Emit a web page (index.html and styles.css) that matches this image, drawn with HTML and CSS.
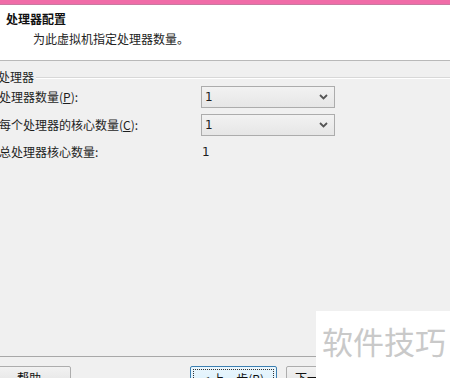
FILE: index.html
```html
<!DOCTYPE html>
<html lang="zh-CN">
<head>
<meta charset="utf-8">
<title>处理器配置</title>
<link rel="stylesheet" href="styles.css">
</head>
<body>
<div class="window">
  <div class="topbar"></div>
  <div class="header">
    <div class="title">处理器配置</div>
    <div class="subtitle">为此虚拟机指定处理器数量。</div>
  </div>
  <div class="content">
    <div class="group-head">
      <span class="group-label">处理器</span>
      <span class="group-line"></span>
    </div>
    <div class="row">
      <span class="label">处理器数量(<u>P</u>):</span>
      <div class="select"><span>1</span><svg class="chev" width="9" height="6" viewBox="0 0 9 6"><path d="M1 1 L4.5 4.5 L8 1" fill="none" stroke="#555" stroke-width="1.8"/></svg></div>
    </div>
    <div class="row">
      <span class="label">每个处理器的核心数量(<u>C</u>):</span>
      <div class="select"><span>1</span><svg class="chev" width="9" height="6" viewBox="0 0 9 6"><path d="M1 1 L4.5 4.5 L8 1" fill="none" stroke="#555" stroke-width="1.8"/></svg></div>
    </div>
    <div class="row row-text">
      <span class="label">总处理器核心数量:</span>
      <span class="value">1</span>
    </div>
  </div>
  <div class="footer">
    <button class="btn btn-help">帮助</button>
    <button class="btn btn-back"><span class="focus">&lt; 上一步(<u>B</u>)</span></button>
    <button class="btn btn-next">下一步(<u>N</u>) &gt;</button>
  </div>
  <div class="watermark">软件技巧</div>
</div>
</body>
</html>
```

FILE: styles.css
```css
html, body {
  margin: 0;
  padding: 0;
}
body {
  width: 450px;
  height: 378px;
  overflow: hidden;
  background: #f0f0f0;
  font-family: "Noto Sans CJK SC", "Noto Sans", sans-serif;
  font-size: 12px;
  color: #1e1e1e;
}
.window {
  position: relative;
  width: 450px;
  height: 378px;
  display: flex;
  flex-direction: column;
  overflow: hidden;
}
.topbar {
  height: 4px;
  background: #f06ca8;
  border-bottom: 1px solid #c97aa0;
  flex: none;
}
.header {
  background: #ffffff;
  height: 56px;
  padding-top: 6px;
  box-sizing: border-box;
  border-bottom: 1px solid #b9b9b9;
  flex: none;
}
.title {
  font-weight: bold;
  line-height: 16px;
  padding-left: 6px;
  color: #111;
}
.subtitle {
  line-height: 16px;
  margin-top: 4px;
  padding-left: 33px;
  color: #222;
}
.content {
  flex: 1;
  padding-top: 8px;
  border-bottom: 1px solid #a8a8a8;
}
.group-head {
  display: flex;
  align-items: center;
  height: 16px;
  margin-left: -2px;
}
.group-label {
  line-height: 16px;
  padding-right: 2px;
}
.group-line {
  flex: 1;
  height: 0;
  border-top: 1px solid #d8d8d8;
  border-bottom: 1px solid #ffffff;
  margin-top: 1px;
}
.row {
  display: flex;
  align-items: center;
  height: 22px;
  margin-left: -1px;
  margin-top: 1px;
}
.row + .row {
  margin-top: 6px;
}
.row.row-text {
  margin-top: 7px;
  height: 18px;
}
.label {
  width: 202px;
  flex: none;
  line-height: 16px;
}
.label u, .btn u {
  text-decoration: underline;
  text-underline-offset: 1px;
}
.select {
  width: 134px;
  height: 22px;
  box-sizing: border-box;
  border: 1px solid #acacac;
  background: linear-gradient(#f2f2f2, #e6e6e6);
  display: flex;
  align-items: center;
  justify-content: space-between;
  padding: 0 6px 0 3px;
  font-family: "DejaVu Sans", sans-serif;
  font-size: 12px;
}
.chev {
  display: block;
}
.value {
  font-family: "DejaVu Sans", sans-serif;
  padding-left: 1px;
}
.footer {
  height: 21px;
  flex: none;
  position: relative;
  display: flex;
  align-items: flex-start;
  padding-top: 9px;
  box-sizing: border-box;
  overflow: visible;
}
.btn {
  flex: none;
  height: 23px;
  font-family: "Noto Sans CJK SC", sans-serif;
  font-size: 12px;
  color: #111;
  background: linear-gradient(#f2f2f2, #e2e2e2);
  border: 1px solid #adadad;
  border-radius: 2px;
  padding: 0;
  line-height: 19px;
}
.btn-help {
  width: 84px;
  margin-left: -13px;
}
.btn-back {
  width: 87px;
  margin-left: 119px;
  border-color: #3c7fb1;
  background: linear-gradient(#eaf6fd, #d9f0fc);
  padding: 2px;
}
.focus {
  display: block;
  border: 1px dotted #333;
  line-height: 17px;
}
.btn-next {
  width: 87px;
  margin-left: 9px;
  text-align: left;
  padding-left: 8px;
}
.watermark {
  position: absolute;
  left: 316px;
  top: 311px;
  width: 134px;
  height: 67px;
  background: #ffffff;
  color: #c9c9c9;
  font-family: "Noto Sans CJK SC", sans-serif;
  font-size: 31px;
  line-height: 36px;
  padding: 12px 0 0 6px;
  box-sizing: border-box;
  white-space: nowrap;
}
```
